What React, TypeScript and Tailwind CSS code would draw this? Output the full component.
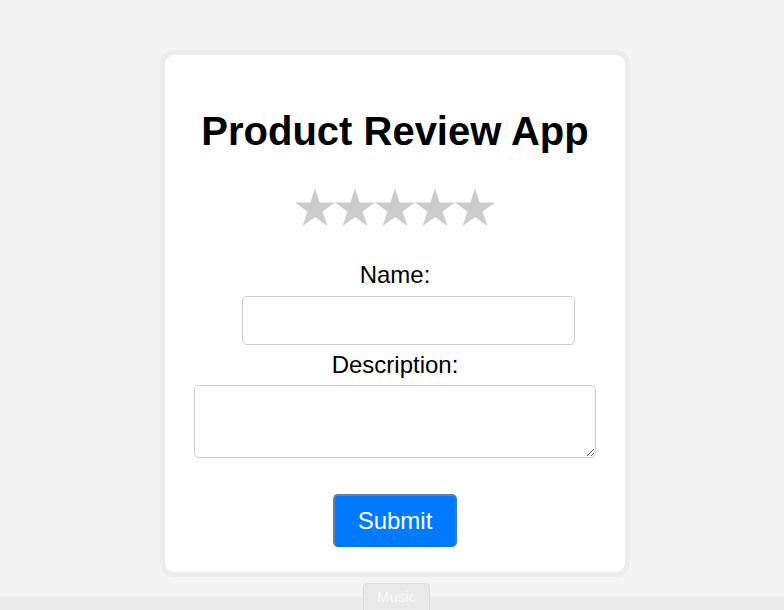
import React, { useState } from 'react';

// Simple five-point star used for the rating row
const Star: React.FC<{ filled: boolean; onClick: () => void }> = ({ filled, onClick }) => (
  <svg
    width="40"
    height="38"
    viewBox="0 0 40 38"
    onClick={onClick}
    className="cursor-pointer"
  >
    <polygon
      points="20,0 24.72,14.5 39.97,14.51 27.64,23.48 32.34,37.99 20,29.03 7.66,37.99 12.36,23.48 0.03,14.51 15.28,14.5"
      fill={filled ? '#ffc107' : '#cccccc'}
    />
  </svg>
);

const App: React.FC = () => {
  const [rating, setRating] = useState(0);
  const [name, setName] = useState('');
  const [description, setDescription] = useState('');

  return (
    <div className="min-h-screen bg-[#f4f4f4] font-['Liberation_Sans',Arial,sans-serif] text-black">
      <div className="flex justify-center pt-[50px] pl-[6px]">
        <div className="w-[470px] rounded-[14px] border-[5px] border-[#ececec] bg-white pb-[25px] flex flex-col items-center">
          <h1 className="mt-[56px] text-[40px] leading-[40px] font-bold">Product Review App</h1>

          {/* rating */}
          <div className="mt-[37px] flex">
            {[1, 2, 3, 4, 5].map((n) => (
              <Star key={n} filled={n <= rating} onClick={() => setRating(n)} />
            ))}
          </div>

          <label className="mt-[37px] text-[24px] leading-[24px]">Name:</label>
          <input
            type="text"
            value={name}
            onChange={(e) => setName(e.target.value)}
            className="mt-[9px] ml-[27px] w-[333px] h-[49px] rounded-[5px] border border-[#cccccc] px-2 text-[16px] outline-none"
          />

          <label className="mt-[8px] text-[24px] leading-[24px]">Description:</label>
          <textarea
            value={description}
            onChange={(e) => setDescription(e.target.value)}
            className="mt-[8px] w-[402px] h-[73px] rounded-[5px] border border-[#cccccc] px-2 py-1 text-[16px] outline-none resize"
          />

          <button className="mt-[36px] w-[124px] h-[53px] rounded-[5px] bg-[#007bff] text-white text-[24px] border-2 border-t-[#6d7f94] border-l-[#6d7f94] border-r-[#2a7fd8] border-b-[#0a74e6]">
            Submit
          </button>
        </div>
      </div>

      {/* bottom strip with the music toggle */}
      <div className="fixed bottom-0 left-0 right-0 h-[13px] bg-[#ebebeb]" />
      <button className="fixed left-[363px] top-[583px] w-[67px] h-[32px] rounded-[4px] border border-[#dcdcdc] bg-[#e9e9e9] text-[#fafafa] text-[15px] leading-[26px] flex justify-center items-start">
        Music
      </button>
    </div>
  );
};

export default App;
